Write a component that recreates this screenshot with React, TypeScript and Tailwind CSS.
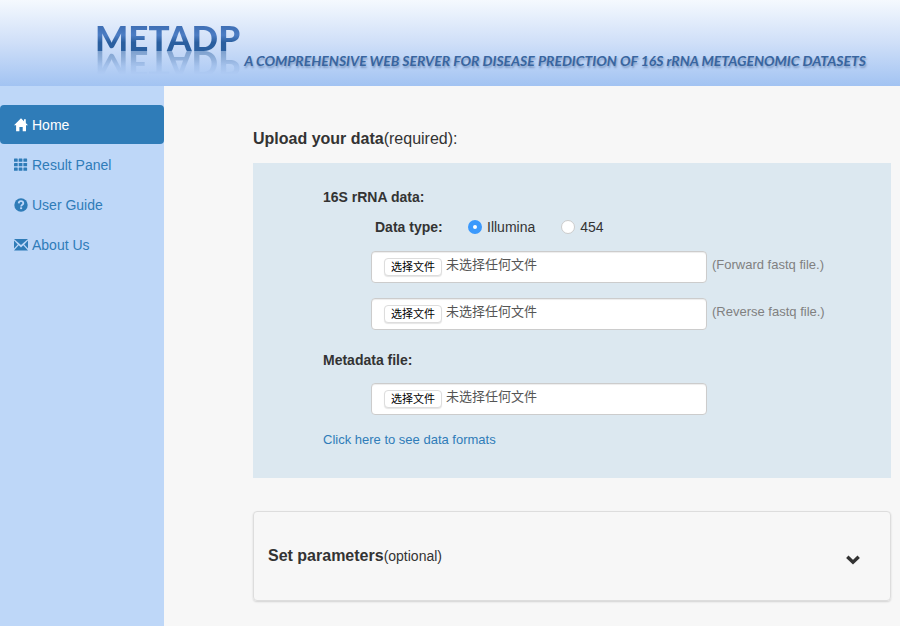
import React, { useState } from 'react';

type IconProps = { className?: string };

const HomeIcon: React.FC<IconProps> = ({ className }) => (
    <svg viewBox="0 0 14 14" className={className} fill="currentColor" aria-hidden="true">
        <path d="M7 0.2 14 7.3 H12 V13.2 H8.7 V9 H5.4 V13.2 H2.1 V7.3 H0 L7 0.2Z" />
        <path d="M10 1.2h1.8v4.3L10 3.7z" />
    </svg>
);

const GridIcon: React.FC<IconProps> = ({ className }) => (
    <svg viewBox="0 0 14 14" className={className} fill="currentColor" aria-hidden="true">
        {[0.5, 5, 9.5].map(y => [0, 4.7, 9.4].map(x => <rect key={`${x}-${y}`} x={x} y={y} width="3.7" height="3.3" rx="0.4" />))}
    </svg>
);

const HelpIcon: React.FC<IconProps> = ({ className }) => (
    <svg viewBox="0 0 14 14" className={className} aria-hidden="true">
        <circle cx="7" cy="7" r="6.7" fill="currentColor" />
        <path d="M4.7 5.4C4.8 3.8 5.7 3.2 7 3.2c1.4 0 2.3.8 2.3 2 0 1.5-2.2 1.5-2.2 3.2" fill="none" stroke="#bed7f8" strokeWidth="1.8" />
        <rect x="6.1" y="9.3" width="2" height="1.8" fill="#bed7f8" />
    </svg>
);

const MailIcon: React.FC<IconProps> = ({ className }) => (
    <svg viewBox="0 0 14 14" className={className} fill="currentColor" aria-hidden="true">
        <path d="M0 1h14L7 7z" />
        <path d="M0 2.6 3.8 6.4 0 10.6z" />
        <path d="M14 2.6 10.2 6.4l3.8 4.2z" />
        <path d="M4.7 7.3 7 9.4l2.3-2.1L14 12.6H0z" />
    </svg>
);

const ChevronIcon: React.FC<IconProps> = ({ className }) => (
    <svg viewBox="0 0 14 10" className={className} aria-hidden="true">
        <path d="M1.3 1.7 7 7.2 12.7 1.7" fill="none" stroke="currentColor" strokeWidth="3.4" />
    </svg>
);

const navItems = [
    { label: 'Home', icon: HomeIcon },
    { label: 'Result Panel', icon: GridIcon },
    { label: 'User Guide', icon: HelpIcon },
    { label: 'About Us', icon: MailIcon },
];

const FilePicker: React.FC<{ id: string; label: string; hint?: string }> = ({ id, label, hint }) => {
    const [fileName, setFileName] = useState('');

    return (
        <div className="flex items-center gap-[5px] pl-12">
            <label
                htmlFor={id}
                className="relative flex h-8 w-84 items-center gap-1 rounded border border-[#ccc] bg-white px-3 shadow-[inset_0_1px_1px_rgba(0,0,0,0.075)] cursor-pointer"
            >
                <input
                    id={id}
                    type="file"
                    aria-label={label}
                    className="sr-only"
                    onChange={e => setFileName(e.target.files?.[0]?.name ?? '')}
                />
                <span className="shrink-0 rounded border border-[#ddd] bg-white px-[6px] text-[11px] leading-4 text-black shadow-[0_1px_1px_rgba(0,0,0,0.1)]">
                    选择文件
                </span>
                <span className="truncate pb-1 text-[13px] leading-4 text-[#555]">{fileName || '未选择任何文件'}</span>
            </label>
            {hint && <span className="pb-1 text-[13px] leading-4 whitespace-nowrap text-[#808080]">{hint}</span>}
        </div>
    );
};

const App: React.FC = () => {
    const [active, setActive] = useState('Home');
    const [dataType, setDataType] = useState('Illumina');
    const [open, setOpen] = useState(false);

    return (
        <div className="flex min-h-screen flex-col bg-[#f7f7f7] font-['Liberation_Sans','Noto_Sans_CJK_SC',sans-serif] text-sm text-[#333]">
            <header className="flex h-[86px] items-start gap-1 bg-linear-to-b from-[#f5f9fe] via-[#cfdff8] to-[#a2c3f2] pl-[95px] font-['Lato',sans-serif]">
                <h1 className="mt-[19px] bg-linear-to-b from-[#3f6fb5] from-20% via-[#4c7dc4] via-45% to-[#2a5f9f] to-65% bg-clip-text text-[35px] leading-9 font-black text-transparent [-webkit-box-reflect:below_-8px_linear-gradient(transparent_25%,rgba(0,0,0,0.55))]">
                    METADP
                </h1>
                <p className="mt-[52px] whitespace-nowrap text-sm leading-[18px] font-bold text-[#38659f] italic [text-shadow:1px_2px_2px_rgba(60,90,140,0.45)]">
                    A COMPREHENSIVE WEB SERVER FOR DISEASE PREDICTION OF 16S rRNA METAGENOMIC DATASETS
                </p>
            </header>

            <div className="flex flex-1">
                <nav className="flex w-[164px] shrink-0 flex-col gap-px bg-[#bed7f8] pt-[19px]">
                    {navItems.map(({ label, icon: Icon }) => (
                        <a
                            key={label}
                            href="#"
                            onClick={() => setActive(label)}
                            className={`flex h-[39px] items-center gap-1 rounded px-[14px] ${
                                active === label ? 'bg-[#2f7cb8] text-white' : 'text-[#2f7cb8]'
                            }`}
                        >
                            <Icon className="size-[14px]" />
                            {label}
                        </a>
                    ))}
                </nav>

                <main className="min-w-0 flex-1 pt-[43px] pr-[9px] pb-6 pl-[89px]">
                    <h2 className="text-base leading-5">
                        <b>Upload your data</b>(required):
                    </h2>

                    <section className="mt-[14px] bg-[#dce8f0] pt-6 pr-8 pb-7 pl-[70px]">
                        <h3 className="leading-5 font-bold">16S rRNA data:</h3>
                        <fieldset className="mt-[10px] flex items-center pl-[52px] leading-5">
                            <legend className="float-left w-[93px] font-bold">Data type:</legend>
                            {['Illumina', '454'].map(type => (
                                <label key={type} className="mr-[26px] flex items-center gap-[5px]">
                                    <input
                                        type="radio"
                                        name="dataType"
                                        value={type}
                                        checked={dataType === type}
                                        onChange={() => setDataType(type)}
                                        className="size-[14px] appearance-none rounded-full border border-[#ccc] bg-white checked:border-5 checked:border-[#3b99fc]"
                                    />
                                    {type}
                                </label>
                            ))}
                        </fieldset>
                        <div className="mt-[14px] flex flex-col gap-[15px]">
                            <FilePicker id="forward" label="Forward fastq file" hint="(Forward fastq file.)" />
                            <FilePicker id="reverse" label="Reverse fastq file" hint="(Reverse fastq file.)" />
                        </div>

                        <h3 className="mt-5 mb-[13px] leading-5 font-bold">Metadata file:</h3>
                        <FilePicker id="metadata" label="Metadata file" />

                        <a href="#" className="mt-[15px] inline-block text-[13px] leading-5 text-[#2f7cb8]">
                            Click here to see data formats
                        </a>
                    </section>

                    <section className="mt-[33px] rounded-sm border border-[#ddd] shadow-[0_1px_2px_rgba(0,0,0,0.15)]">
                        <button
                            type="button"
                            aria-expanded={open}
                            onClick={() => setOpen(!open)}
                            className="flex h-[88px] w-full items-center justify-between pr-[30px] pl-[14px]"
                        >
                            <span className="text-base leading-5">
                                <b>Set parameters</b>
                                <span className="text-sm">(optional)</span>
                            </span>
                            <ChevronIcon className="mt-2 h-[10px] w-[14px]" />
                        </button>
                    </section>
                </main>
            </div>
        </div>
    );
};

export default App;
